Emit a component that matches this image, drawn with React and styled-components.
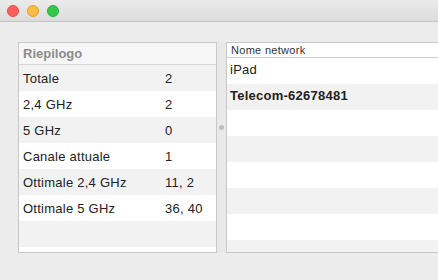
import styled, { createGlobalStyle } from "styled-components";

const GlobalStyle = createGlobalStyle`
  html, body {
    margin: 0;
    padding: 0;
    background: #ececec;
  }
  body {
    font-family: "Liberation Sans", Arial, sans-serif;
    -webkit-font-smoothing: antialiased;
  }
`;

const summary = [
  ["Totale", "2"],
  ["2,4 GHz", "2"],
  ["5 GHz", "0"],
  ["Canale attuale", "1"],
  ["Ottimale 2,4 GHz", "11, 2"],
  ["Ottimale 5 GHz", "36, 40"],
  ["", ""],
];

const networks = [
  { name: "iPad" },
  { name: "Telecom-62678481", bold: true },
  {}, {}, {}, {}, {}, {},
];

export default function App() {
  return (
    <Window>
      <GlobalStyle />
      <TitleBar>
        <Light color="#fc605c" border="#e14c48" />
        <Light color="#fdbc40" border="#e0a131" />
        <Light color="#34c84a" border="#29ad3c" />
      </TitleBar>

      <Content>
        <SummaryPanel>
          <SummaryHeader>Riepilogo</SummaryHeader>
          {summary.map(([label, value], i) => (
            <SummaryRow key={i} $odd={i % 2 === 1}>
              <span>{label}</span>
              <span>{value}</span>
            </SummaryRow>
          ))}
        </SummaryPanel>

        <Splitter>
          <Knob />
        </Splitter>

        <NetworkPanel>
          <ColumnHeader>Nome network</ColumnHeader>
          {networks.map((n, i) => (
            <NetworkRow key={i} $odd={i % 2 === 1} $bold={n.bold}>
              {n.name}
            </NetworkRow>
          ))}
        </NetworkPanel>
      </Content>
    </Window>
  );
}

const Window = styled.div`
  width: 438px;
  height: 280px;
  overflow: hidden;
  background: #ececec;
`;

const TitleBar = styled.div`
  height: 21px;
  display: flex;
  align-items: center;
  gap: 8px;
  padding-left: 7px;
  background: linear-gradient(#ebebeb, #dcdcdc);
  border-bottom: 1px solid #c4c4c4;
`;

const Light = styled.span`
  box-sizing: border-box;
  width: 12px;
  height: 12px;
  border-radius: 50%;
  background: ${(p) => p.color};
  border: 0.5px solid ${(p) => p.border};
`;

const Content = styled.div`
  display: flex;
  padding: 20px 0 0 18px;
  height: 211px;
`;

const SummaryPanel = styled.div`
  width: 197px;
  border: 1px solid #c8c8c8;
  background: #fff;
  display: flex;
  flex-direction: column;
`;

const SummaryHeader = styled.div`
  height: 21px;
  border-bottom: 1px solid #d6d6d6;
  background: #f6f6f6;
  color: #8b8b8b;
  font-weight: bold;
  font-size: 13px;
  line-height: 22px;
  padding-left: 4px;
`;

const SummaryRow = styled.div`
  height: 26px;
  display: grid;
  grid-template-columns: 142px 1fr;
  align-items: center;
  padding-left: 4px;
  font-size: 13px;
  letter-spacing: 0.25px;
  color: #222;
  background: ${(p) => (p.$odd ? "#ffffff" : "#f2f2f2")};
`;

const Splitter = styled.div`
  width: 9px;
  position: relative;
  background: #e9e9e9;
`;

const Knob = styled.span`
  position: absolute;
  left: 2px;
  top: 83px;
  width: 5px;
  height: 5px;
  border-radius: 50%;
  background: #bdbdbd;
`;

const NetworkPanel = styled.div`
  flex: 1;
  border: 1px solid #c8c8c8;
  border-right: none;
  background: #fff;
  overflow: hidden;
`;

const ColumnHeader = styled.div`
  height: 14px;
  border-bottom: 1px solid #cfcfcf;
  font-size: 11px;
  line-height: 15px;
  letter-spacing: 0.3px;
  color: #333;
  padding-left: 4px;
`;

const NetworkRow = styled.div`
  box-sizing: border-box;
  height: 26px;
  display: flex;
  align-items: center;
  padding: 0 0 4px 3px;
  font-size: 13px;
  letter-spacing: 0.25px;
  color: #222;
  font-weight: ${(p) => (p.$bold ? "bold" : "normal")};
  background: ${(p) => (p.$odd ? "#f2f2f2" : "#ffffff")};
`;
